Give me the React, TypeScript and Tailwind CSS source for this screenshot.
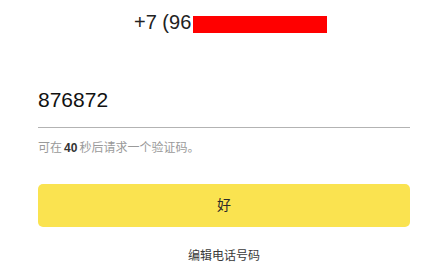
export default function App() {
  return (
    <div
      className="w-[444px] h-[279px] bg-white overflow-hidden pl-[38px] pr-[34px] text-[#1a1a1a]"
      style={{ fontFamily: '"Liberation Sans", "Noto Sans CJK SC", sans-serif' }}
    >
      {/* Phone number (redacted) */}
      <div className="pt-[10px] pl-[96px] flex">
        <div className="relative text-[20px] leading-[24px] text-[#222]">
          +7 (96
          <span className="absolute left-[59px] top-[6px] w-[134px] h-[17px] bg-[#ff0000]" />
        </div>
      </div>

      {/* Code input */}
      <div className="mt-[54px] pb-[15px] border-b border-[#b3b3b3] text-[21px] leading-[24px] text-[#111]">
        876872
      </div>

      <p className="mt-[12px] text-[12px] leading-[16px] text-[#9a9a9a]">
        可在<span className="mx-[2px] text-[#333] font-semibold">40</span>秒后请求一个验证码。
      </p>

      <button className="mt-[28px] w-full h-[43px] rounded-[5px] bg-[#fae350] text-[14px] text-[#2a2a2a]">
        好
      </button>

      <div className="mt-[21px] text-center text-[12px] leading-[16px] text-[#3a3a3a]">
        编辑电话号码
      </div>
    </div>
  );
}
